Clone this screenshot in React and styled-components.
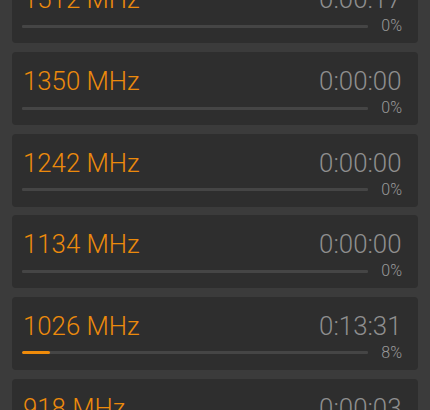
import React from "react";
import styled, { createGlobalStyle } from "styled-components";

const Global = createGlobalStyle`
  html, body {
    margin: 0;
    padding: 0;
    background: #3b3b3b;
    overflow: hidden;
  }
  body {
    font-family: Roboto, "Noto Sans", sans-serif;
  }
`;

const Screen = styled.div`
  width: 430px;
  height: 410px;
  overflow: hidden;
  background: #3b3b3b;
`;

const List = styled.div`
  display: flex;
  flex-direction: column;
  gap: 8.67px;
  padding: 0 12px;
  margin-top: -29.67px;
`;

const Card = styled.div`
  box-sizing: border-box;
  height: 73px;
  background: #2e2e2e;
  border-radius: 4px;
  padding: 16px 16px 0 10px;
  display: flex;
  flex-direction: column;
  gap: 6px;
`;

const TopRow = styled.div`
  display: flex;
  justify-content: space-between;
  align-items: baseline;
  font-size: 25.8px;
  line-height: 26px;
  font-weight: 300;
`;

const Freq = styled.span`
  color: #ec8a0c;
  padding-left: 1px;
`;

const Time = styled.span`
  color: #8f8f8f;
  padding-right: 0.5px;
`;

const BottomRow = styled.div`
  display: flex;
  align-items: center;
  height: 16px;
`;

const Track = styled.div`
  flex: 1;
  height: 3px;
  background: #454545;
  border-radius: 1px;
  overflow: hidden;
`;

const Fill = styled.div`
  height: 100%;
  background: #ef8b0a;
  border-radius: 1.5px;
`;

const Pct = styled.span`
  width: 34px;
  text-align: right;
  font-size: 16px;
  line-height: 16px;
  font-weight: 300;
  color: #9a9a9a;
`;

const rows = [
  { f: "1512 MHz", t: "0:00:17", p: 0 },
  { f: "1350 MHz", t: "0:00:00", p: 0 },
  { f: "1242 MHz", t: "0:00:00", p: 0 },
  { f: "1134 MHz", t: "0:00:00", p: 0 },
  { f: "1026 MHz", t: "0:13:31", p: 8 },
  { f: "918 MHz", t: "0:00:03", p: 0 },
];

export default function App() {
  return (
    <Screen>
      <Global />
      <List>
        {rows.map((r) => (
          <Card key={r.f}>
            <TopRow>
              <Freq>{r.f}</Freq>
              <Time>{r.t}</Time>
            </TopRow>
            <BottomRow>
              <Track>
                <Fill style={{ width: `${r.p}%` }} />
              </Track>
              <Pct>{r.p}%</Pct>
            </BottomRow>
          </Card>
        ))}
      </List>
    </Screen>
  );
}
